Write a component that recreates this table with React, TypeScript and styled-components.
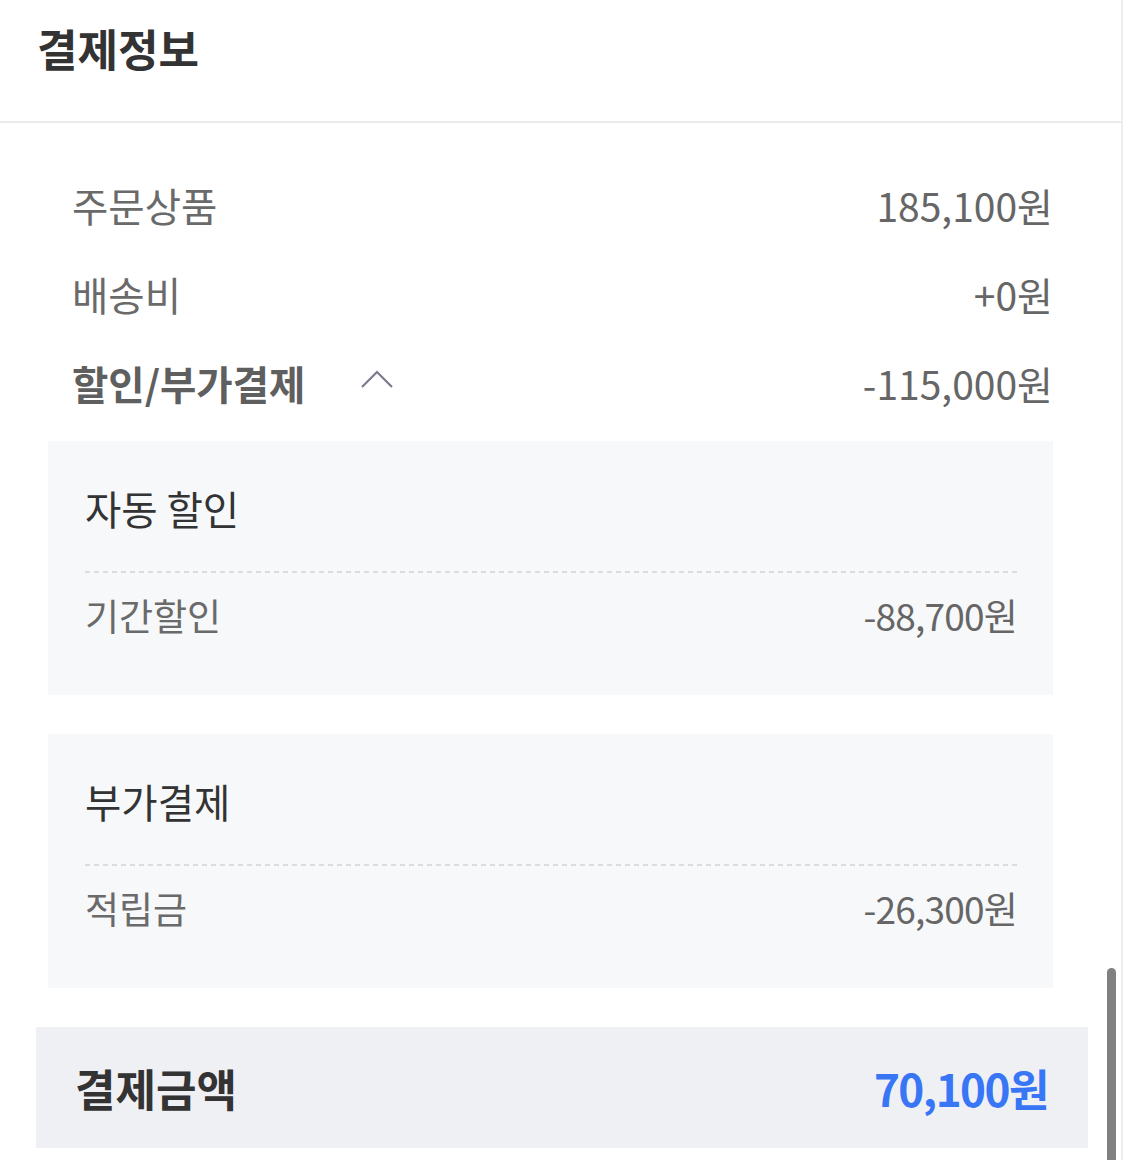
import styled, { createGlobalStyle } from "styled-components";

const GlobalStyle = createGlobalStyle`
  html, body {
    margin: 0;
    padding: 0;
    background: #ffffff;
  }
  body {
    font-family: "Noto Sans CJK KR", "Noto Sans", sans-serif;
    -webkit-font-smoothing: antialiased;
  }
`;

type Line = { label: string; amount: string };

const summary: Line[] = [
  { label: "주문상품", amount: "185,100원" },
  { label: "배송비", amount: "+0원" },
];

const groups: { title: string; items: Line[] }[] = [
  { title: "자동 할인", items: [{ label: "기간할인", amount: "-88,700원" }] },
  { title: "부가결제", items: [{ label: "적립금", amount: "-26,300원" }] },
];

export default function App() {
  return (
    <>
      <GlobalStyle />
      <Panel>
        <Header>
          <Title>결제정보</Title>
        </Header>
        <Body>
          {summary.map((line) => (
            <Row key={line.label}>
              <Label>{line.label}</Label>
              <Amount>{line.amount}</Amount>
            </Row>
          ))}
          <Row>
            <Toggle>
              <Label $bold>할인/부가결제</Label>
              <Chevron viewBox="0 0 32 20" aria-hidden>
                <path d="M1 18 L16 3 L31 18" />
              </Chevron>
            </Toggle>
            <Amount>-115,000원</Amount>
          </Row>
          <Groups>
            {groups.map((group) => (
              <Group key={group.title}>
                <GroupTitle>{group.title}</GroupTitle>
                <Dashed />
                {group.items.map((item) => (
                  <SubRow key={item.label}>
                    <SubLabel>{item.label}</SubLabel>
                    <SubAmount>{item.amount}</SubAmount>
                  </SubRow>
                ))}
              </Group>
            ))}
          </Groups>
          <Total>
            <TotalLabel>결제금액</TotalLabel>
            <TotalAmount>70,100원</TotalAmount>
          </Total>
        </Body>
        <ScrollThumb />
      </Panel>
    </>
  );
}

const Panel = styled.div`
  position: relative;
  width: 1121px;
  height: 1160px;
  border-right: 2px solid #ededed;
  overflow: hidden;
`;

const Header = styled.header`
  height: 123px;
  padding-left: 37px;
  display: flex;
  align-items: center;
  border-bottom: 2px solid #ebebeb;
  box-sizing: border-box;
  padding-bottom: 26px;
`;

const Title = styled.h1`
  margin: 0;
  font-size: 44px;
  font-weight: 700;
  color: #333333;
`;

const Body = styled.div`
  padding: 37px 0 0 48px;
  width: 1005px;
`;

const Row = styled.div`
  display: flex;
  justify-content: space-between;
  align-items: center;
  height: 89px;
  padding: 0 0 0 24px;
`;

const Toggle = styled.div`
  display: flex;
  align-items: center;
  gap: 56px;
`;

const Label = styled.span<{ $bold?: boolean }>`
  font-size: 39.5px;
  font-weight: ${(p) => (p.$bold ? 700 : 400)};
  color: ${(p) => (p.$bold ? "#5f5f5f" : "#6a6a6a")};
`;

const Amount = styled.span`
  font-size: 39px;
  color: #666666;
`;

const Chevron = styled.svg`
  width: 32px;
  height: 20px;
  margin-top: -8px;
  fill: none;
  stroke: #7b7b8c;
  stroke-width: 2.2;
`;

const Groups = styled.div`
  display: flex;
  flex-direction: column;
  gap: 39px;
  margin-top: 14px;
`;

const Group = styled.section`
  background: #f7f8fa;
  padding: 39px 36px 52px 37px;
`;

const GroupTitle = styled.h2`
  margin: 0 0 35px;
  height: 56px;
  line-height: 56px;
  font-size: 39.5px;
  font-weight: 400;
  color: #333333;
`;

const Dashed = styled.div`
  height: 2px;
  background: repeating-linear-gradient(
    to right,
    #dcdcdc 0,
    #dcdcdc 5px,
    transparent 5px,
    transparent 9px
  );
`;

const SubRow = styled.div`
  display: flex;
  justify-content: space-between;
  align-items: center;
  height: 56px;
  margin-top: 14px;
`;

const SubLabel = styled.span`
  font-size: 37px;
  color: #6a6a6a;
`;

const SubAmount = styled.span`
  font-size: 37px;
  color: #666666;
  letter-spacing: -0.8px;
`;

const Total = styled.div`
  display: flex;
  justify-content: space-between;
  align-items: center;
  margin: 39px -35px 0 -12px;
  height: 121px;
  padding: 0 40px 0 39px;
  background: #eff0f4;
`;

const TotalLabel = styled.span`
  font-size: 44px;
  font-weight: 700;
  color: #333333;
`;

const TotalAmount = styled.span`
  font-size: 44px;
  font-weight: 700;
  color: #3876f6;
  letter-spacing: -1.5px;
`;

const ScrollThumb = styled.div`
  position: absolute;
  left: 1107px;
  top: 968px;
  width: 9px;
  height: 220px;
  border-radius: 5px;
  background: #808080;
`;
